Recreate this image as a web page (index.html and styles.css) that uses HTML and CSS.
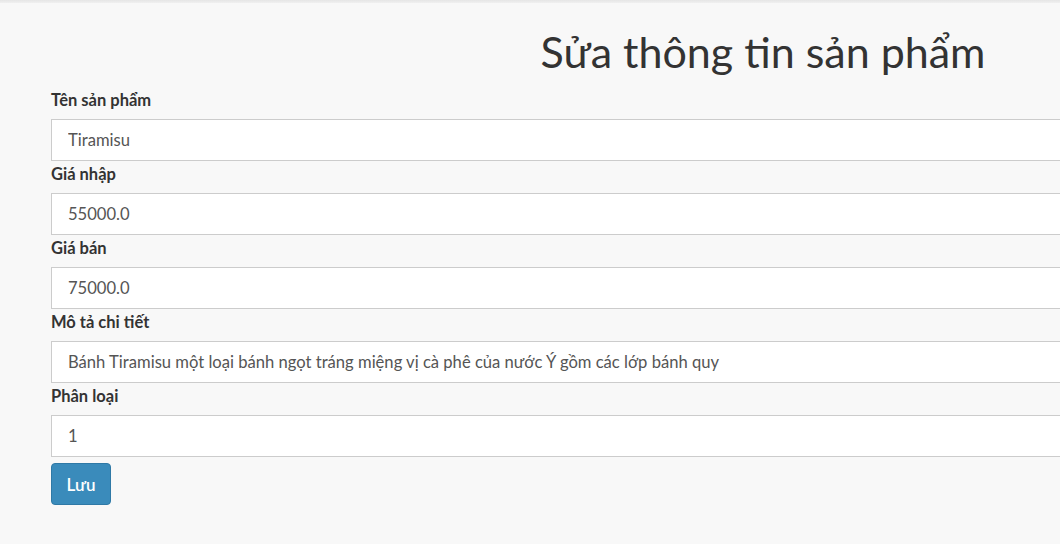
FILE: index.html
```html
<!DOCTYPE html>
<html lang="vi">
<head>
<meta charset="utf-8">
<title>Sửa thông tin sản phẩm</title>
<link rel="stylesheet" href="styles.css">
</head>
<body>
<div class="topbar"></div>
<main class="container">
  <h1 class="title">Sửa thông tin sản phẩm</h1>
  <form class="form">
    <div class="field">
      <label class="label">Tên sản phẩm</label>
      <input class="input" type="text" value="Tiramisu">
    </div>
    <div class="field">
      <label class="label">Giá nhập</label>
      <input class="input" type="text" value="55000.0">
    </div>
    <div class="field">
      <label class="label">Giá bán</label>
      <input class="input" type="text" value="75000.0">
    </div>
    <div class="field">
      <label class="label">Mô tả chi tiết</label>
      <input class="input" type="text" value="Bánh Tiramisu một loại bánh ngọt tráng miệng vị cà phê của nước Ý gồm các lớp bánh quy">
    </div>
    <div class="field">
      <label class="label">Phân loại</label>
      <input class="input" type="text" value="1">
    </div>
    <button class="btn" type="button">Lưu</button>
  </form>
</main>
</body>
</html>
```
FILE: styles.css
```css
* { box-sizing: border-box; }
html, body { margin: 0; padding: 0; }
body {
  background: #f8f8f8;
  font-family: Lato, "Liberation Sans", sans-serif;
  color: #333;
  overflow: hidden;
  width: 1060px;
  height: 544px;
}
.topbar {
  height: 3px;
  background: linear-gradient(#e6e6e6, #f0f0f0);
}
.container {
  width: 1526px;
  padding-left: 51px;
}
.title {
  margin: 0 0 0 -51px;
  height: 84px;
  padding-top: 21px;
  text-align: center;
  font-weight: 400;
  font-size: 43px;
  line-height: 56px;
  color: #333;
}
.form { display: flex; flex-direction: column; }
.field { display: flex; flex-direction: column; }
.label {
  font-weight: 700;
  font-size: 16.5px;
  line-height: 24px;
  padding-top: 1px;
  margin-bottom: 7px;
  color: #333;
}
.input {
  height: 42px;
  border: 1px solid #ccc;
  background: #fff;
  padding: 0 16px;
  font-family: inherit;
  font-size: 16.6px;
  color: #555;
  width: 100%;
  outline: none;
}
.btn {
  align-self: flex-start;
  margin-top: 6px;
  width: 60px;
  height: 42px;
  background: #3a8bbb;
  border: 1px solid #2f79a6;
  border-radius: 4px;
  color: #fff;
  font-family: inherit;
  font-size: 17px;
  font-weight: 600;
  padding: 0;
}
```
